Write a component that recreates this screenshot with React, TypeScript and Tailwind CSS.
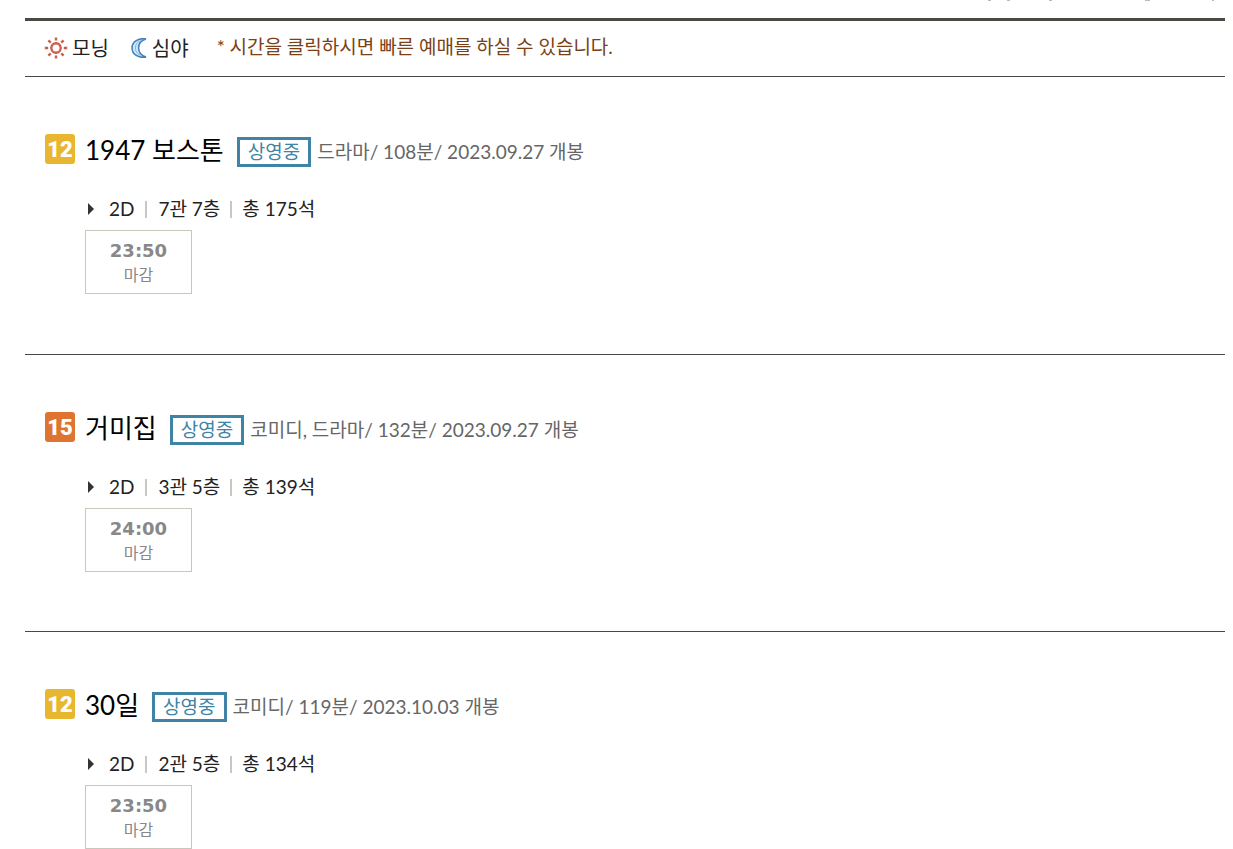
import React from 'react';

interface Movie {
  rating: '12' | '15';
  title: string;
  genre: string;
  runtime: string;
  release: string;
  hall: string;
  seats: string;
  time: string;
}

const movies: Movie[] = [
  { rating: '12', title: '1947 보스톤', genre: '드라마', runtime: '108분', release: '2023.09.27 개봉', hall: '7관 7층', seats: '총 175석', time: '23:50' },
  { rating: '15', title: '거미집', genre: '코미디, 드라마', runtime: '132분', release: '2023.09.27 개봉', hall: '3관 5층', seats: '총 139석', time: '24:00' },
  { rating: '12', title: '30일', genre: '코미디', runtime: '119분', release: '2023.10.03 개봉', hall: '2관 5층', seats: '총 134석', time: '23:50' },
];

const ratingColors = {
  '12': 'bg-[#e9b62f]',
  '15': 'bg-[#df7430]',
};

const SunIcon: React.FC = () => (
  <svg width="24" height="22" viewBox="0 0 24 22" fill="none" stroke="#c9604f" aria-hidden="true">
    <circle cx="12" cy="11" r="4.7" strokeWidth="2.4" />
    <path
      strokeWidth="2.4"
      d="M12 .5v3M12 18.5v3M.8 11h3.4M19.8 11h3.4M4.4 3.4l2.3 2.3M17.3 16.3l2.3 2.3M19.6 3.4l-2.3 2.3M6.7 16.3l-2.3 2.3"
    />
  </svg>
);

const MoonIcon: React.FC = () => (
  <svg width="16" height="20" viewBox="0 0 16 20" aria-hidden="true">
    <path d="M15 1C7.5 -.5 1 3.8 1 10s6.5 10.5 14 9C10.2 17.6 7.6 14.4 7.6 10S10.2 2.4 15 1Z" fill="#cfe6f8" stroke="#3f80bc" strokeWidth="1.5" />
    <path d="M9.5 2.5C6 4.2 4.4 6.8 4.4 10s1.6 5.8 5.1 7.5" fill="none" stroke="#86b9e3" strokeWidth="1" />
  </svg>
);

const RatingBadge: React.FC<{ rating: Movie['rating'] }> = ({ rating }) => (
  <span
    className={`h-[30px] w-[30px] shrink-0 rounded-[3px] text-center font-['Roboto',sans-serif] text-[22px] leading-[31px] font-black text-white ${ratingColors[rating]}`}
  >
    {rating}
  </span>
);

const MovieItem: React.FC<{ movie: Movie }> = ({ movie }) => (
  <li className="border-b border-[#4a4843] px-5 pt-[57px] pb-[59px] first:pb-[60px] last:border-b-0 last:pb-0">
    <div className="flex h-8 items-start">
      <RatingBadge rating={movie.rating} />
      <a href="#movie" className="ml-[10px] text-[26px] leading-8 whitespace-nowrap text-black">
        {movie.title}
      </a>
      <span className="mt-[3px] ml-[13px] h-[30px] border-3 border-[#3f84a5] px-2 text-[19px] leading-6 whitespace-nowrap text-[#3f84a5]">
        상영중
      </span>
      <span className="mt-[3px] ml-[6px] text-[19px] leading-[30px] whitespace-nowrap text-[#666]">
        {movie.genre}/ {movie.runtime}/ {movie.release}
      </span>
    </div>

    <div className="ml-10 pt-[31px]">
      <div className="flex h-[33px] items-center pb-[9px] pl-[3px] text-[19px] leading-6 text-[#222]">
        <svg width="7" height="12" viewBox="0 0 7 12" className="mr-[14px]" aria-hidden="true">
          <path d="M0 0l6 6-6 6z" fill="#333" />
        </svg>
        <span>2D</span>
        <span className="mx-[11px] h-[17px] w-[2px] bg-[#c8c7c0]" />
        <span>{movie.hall}</span>
        <span className="mx-[10px] h-[17px] w-[2px] bg-[#c8c7c0]" />
        <span>{movie.seats}</span>
      </div>
      <button type="button" disabled className="flex h-16 w-[107px] flex-col items-center border border-[#c8c7bc] pt-2 text-[#888]">
        <span className="font-['DejaVu_Sans'] text-[18px] leading-6 font-bold">{movie.time}</span>
        <span className="text-[16px] leading-6">마감</span>
      </button>
    </div>
  </li>
);

export default function App() {
  return (
    <main className="bg-white pr-2 pl-[25px] font-['Lato','Noto_Sans_CJK_KR',sans-serif]">
      {/* bottom edge of the notice that is scrolled out of view */}
      <div className="flex h-[18px] justify-end">
        <svg width="240" height="2" viewBox="0 0 240 2" fill="#bbb8c4" aria-hidden="true">
          <path d="M3 0h3v1H3zM22 0h3v1h-3zM64 0h3v1h-3zM160 0h5v1h-5zM227 0h2v1h-2z" />
        </svg>
      </div>
      <div className="flex h-[59px] items-center border-t-3 border-b border-[#4a4843] pb-[2px] pl-[19px] text-[20px] text-[#222]">
        <SunIcon />
        <span className="ml-1">모닝</span>
        <span className="ml-[22px] flex items-center gap-[5px]">
          <MoonIcon />
          심야
        </span>
        <p className="ml-7 text-[19px] text-[#7a4117]">* 시간을 클릭하시면 빠른 예매를 하실 수 있습니다.</p>
      </div>
      <ul>
        {movies.map((movie) => (
          <MovieItem key={movie.title} movie={movie} />
        ))}
      </ul>
    </main>
  );
}
